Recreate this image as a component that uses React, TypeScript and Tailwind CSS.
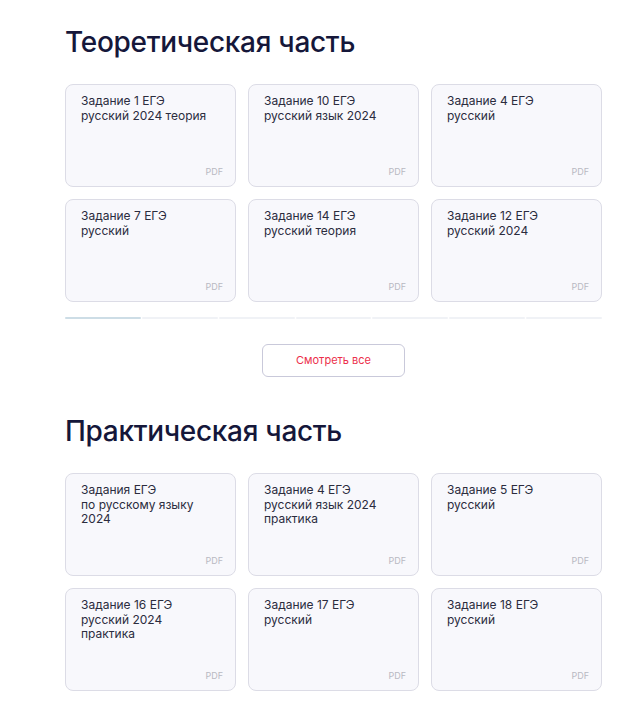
import React from 'react';

type Doc = { id: string; lines: string[] };

const theory: Doc[] = [
    { id: 't1', lines: ['Задание 1 ЕГЭ', 'русский 2024 теория'] },
    { id: 't2', lines: ['Задание 10 ЕГЭ', 'русский язык 2024'] },
    { id: 't3', lines: ['Задание 4 ЕГЭ', 'русский'] },
    { id: 't4', lines: ['Задание 7 ЕГЭ', 'русский'] },
    { id: 't5', lines: ['Задание 14 ЕГЭ', 'русский теория'] },
    { id: 't6', lines: ['Задание 12 ЕГЭ', 'русский 2024'] },
];

const practice: Doc[] = [
    { id: 'p1', lines: ['Задания ЕГЭ', 'по русскому языку', '2024'] },
    { id: 'p2', lines: ['Задание 4 ЕГЭ', 'русский язык 2024', 'практика'] },
    { id: 'p3', lines: ['Задание 5 ЕГЭ', 'русский'] },
    { id: 'p4', lines: ['Задание 16 ЕГЭ', 'русский 2024', 'практика'] },
    { id: 'p5', lines: ['Задание 17 ЕГЭ', 'русский'] },
    { id: 'p6', lines: ['Задание 18 ЕГЭ', 'русский'] },
];

function DocCard({ doc }: { doc: Doc }) {
    return (
        <a
            href="#"
            className="flex h-[103px] flex-col justify-between rounded-lg border border-[#dcdce6] bg-[#f8f8fc] pl-[15px] pr-3 pt-[9px] pb-[10px]"
        >
            <div className="text-[12px] leading-[14.5px] text-[#2b2c3e]">
                {doc.lines.map((l) => (
                    <div key={l}>{l}</div>
                ))}
            </div>
            <div className="self-end text-[9px] leading-none text-[#b8b8c2]">PDF</div>
        </a>
    );
}

function Section({ title, docs }: { title: string; docs: Doc[] }) {
    return (
        <section>
            <h2 className="text-[28px] font-medium leading-[34px] tracking-[-0.3px] text-[#15173a]">
                {title}
            </h2>
            <div className="mt-[25px] grid grid-cols-3 gap-3">
                {docs.map((d) => (
                    <DocCard key={d.id} doc={d} />
                ))}
            </div>
        </section>
    );
}

export default function App() {
    return (
        <div className="min-h-[705px] bg-white font-['Inter','Noto_Sans',sans-serif]">
            <div className="ml-[65px] w-[537px] pt-[25px]">
                <Section title="Теоретическая часть" docs={theory} />

                {/* slider progress */}
                <div className="mt-[15px] flex gap-px">
                    {Array.from({ length: 7 }).map((_, i) => (
                        <div
                            key={i}
                            className={`h-[2px] flex-1 rounded-full ${i === 0 ? 'bg-[#cddde6]' : 'bg-[#f0f2f6]'}`}
                        />
                    ))}
                </div>

                <div className="mt-[25px] flex justify-center">
                    <button className="h-[33px] w-[143px] rounded-md border border-[#c9c9da] bg-white text-[11px] text-[#ec2f4b]">
                        Смотреть все
                    </button>
                </div>

                <div className="mt-[37px]">
                    <Section title="Практическая часть" docs={practice} />
                </div>
            </div>
        </div>
    );
}
